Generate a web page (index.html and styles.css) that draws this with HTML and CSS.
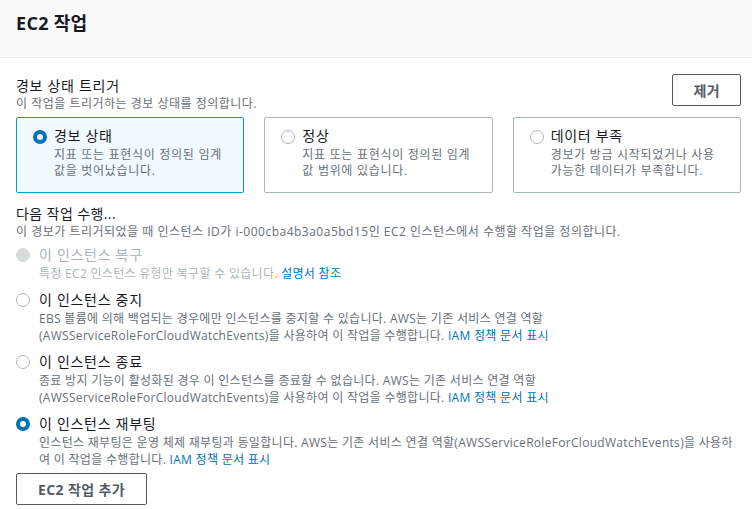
FILE: index.html
```html
<!DOCTYPE html>
<html lang="ko">
<head>
<meta charset="utf-8">
<link rel="stylesheet" href="styles.css">
</head>
<body>
<header class="head"><h1 class="head-title">EC2 작업</h1></header>
<main class="content">
  <div class="trigger-row">
    <div>
      <div class="label">경보 상태 트리거</div>
      <div class="sub">이 작업을 트리거하는 경보 상태를 정의합니다.</div>
    </div>
    <button class="btn">제거</button>
  </div>
  <div class="cards">
    <div class="card selected">
      <span class="radio on"></span>
      <div>
        <div class="card-title">경보 상태</div>
        <div class="card-desc">지표 또는 표현식이 정의된 임계<br>값을 벗어났습니다.</div>
      </div>
    </div>
    <div class="card">
      <span class="radio"></span>
      <div>
        <div class="card-title">정상</div>
        <div class="card-desc">지표 또는 표현식이 정의된 임계<br>값 범위에 있습니다.</div>
      </div>
    </div>
    <div class="card">
      <span class="radio"></span>
      <div>
        <div class="card-title">데이터 부족</div>
        <div class="card-desc">경보가 방금 시작되었거나 사용<br>가능한 데이터가 부족합니다.</div>
      </div>
    </div>
  </div>

  <div class="label action-label">다음 작업 수행...</div>
  <div class="sub">이 경보가 트리거되었을 때 인스턴스 ID가 i-000cba4b3a0a5bd15인 EC2 인스턴스에서 수행할 작업을 정의합니다.</div>

  <div class="options">
    <div class="option disabled">
      <span class="radio dis"></span>
      <div>
        <div class="opt-title">이 인스턴스 복구</div>
        <div class="opt-desc">특정 EC2 인스턴스 유형만 복구할 수 있습니다. <a class="link">설명서 참조</a></div>
      </div>
    </div>
    <div class="option">
      <span class="radio"></span>
      <div>
        <div class="opt-title">이 인스턴스 중지</div>
        <div class="opt-desc">EBS 볼륨에 의해 백업되는 경우에만 인스턴스를 중지할 수 있습니다. AWS는 기존 서비스 연결 역할<br>(AWSServiceRoleForCloudWatchEvents)을 사용하여 이 작업을 수행합니다. <a class="link">IAM 정책 문서 표시</a></div>
      </div>
    </div>
    <div class="option">
      <span class="radio"></span>
      <div>
        <div class="opt-title">이 인스턴스 종료</div>
        <div class="opt-desc">종료 방지 기능이 활성화된 경우 이 인스턴스를 종료할 수 없습니다. AWS는 기존 서비스 연결 역할<br>(AWSServiceRoleForCloudWatchEvents)을 사용하여 이 작업을 수행합니다. <a class="link">IAM 정책 문서 표시</a></div>
      </div>
    </div>
    <div class="option">
      <span class="radio on"></span>
      <div>
        <div class="opt-title">이 인스턴스 재부팅</div>
        <div class="opt-desc">인스턴스 재부팅은 운영 체제 재부팅과 동일합니다. AWS는 기존 서비스 연결 역할(AWSServiceRoleForCloudWatchEvents)을 사용하<br>여 이 작업을 수행합니다. <a class="link">IAM 정책 문서 표시</a></div>
      </div>
    </div>
  </div>
  <button class="btn add-btn">EC2 작업 추가</button>
</main>
</body>
</html>
```
FILE: styles.css
```css
* { box-sizing: border-box; }
body {
  margin: 0;
  background: #fff;
  font-family: "Open Sans", "Noto Sans CJK KR", sans-serif;
  color: #16191f;
}
.head {
  height: 58px;
  background: #fafafa;
  border-bottom: 1px solid #eaeded;
  padding: 11px 16px 0;
}
.head-title {
  margin: 0;
  font-size: 18px;
  line-height: 24px;
  font-weight: 700;
  letter-spacing: 0.3px;
  color: #16191f;
}
.content {
  padding: 16px 11px 0 16px;
}
.trigger-row {
  display: flex;
  justify-content: space-between;
  align-items: flex-start;
}
.trigger-row > div { padding-top: 2px; }
.label {
  font-size: 14px;
  line-height: 20px;
  letter-spacing: 0.7px;
  color: #16191f;
}
.action-label { letter-spacing: 0.4px; }
.sub {
  font-size: 12px;
  line-height: 16px;
  letter-spacing: 0.5px;
  color: #687078;
  white-space: nowrap;
}
.btn {
  font-family: inherit;
  background: #fff;
  border: 1px solid #545b64;
  border-radius: 2px;
  color: #545b64;
  font-weight: 700;
  font-size: 14px;
  letter-spacing: 0.4px;
  height: 32px;
  padding: 0 20px;
  cursor: pointer;
}
.cards {
  display: grid;
  grid-template-columns: 1fr 1fr 1fr;
  gap: 20px;
  margin-top: 5px;
}
.card {
  height: 76px;
  border: 1px solid #aab7b8;
  border-radius: 2px;
  padding: 8px 8px 0 16px;
  display: flex;
  gap: 7px;
  align-items: flex-start;
}
.card.selected {
  background: #f1faff;
  border-color: #00a1c9;
}
.card .radio { margin-top: 4px; }
.card-title {
  font-size: 14px;
  line-height: 20px;
  letter-spacing: 0.7px;
}
.card-desc {
  font-size: 12px;
  line-height: 16px;
  letter-spacing: 0.7px;
  color: #687078;
  white-space: nowrap;
  margin-top: 1px;
}
.radio {
  flex: none;
  width: 14px;
  height: 14px;
  border-radius: 50%;
  border: 1.5px solid #aab7b8;
  background: #fff;
}
.radio.on {
  border: 4px solid #0073bb;
}
.radio.dis {
  background: #d5dbdb;
  border-color: #d5dbdb;
}
.action-label { margin-top: 11px; }
.options {
  display: flex;
  flex-direction: column;
  gap: 8px;
  margin-top: 5px;
}
.option {
  display: flex;
  gap: 9px;
  align-items: flex-start;
}
.option .radio { margin-top: 3px; }
.opt-title {
  font-size: 14px;
  line-height: 20px;
  letter-spacing: 0.7px;
}
.opt-desc {
  font-size: 12px;
  line-height: 17px;
  letter-spacing: 0.3px;
  color: #687078;
  white-space: nowrap;
}
.disabled .opt-title, .disabled .opt-desc { color: #aab7b8; }
.link { color: #0073bb; text-decoration: none; }
.add-btn {
  margin-top: 5px;
  width: 131px;
  padding: 0;
}
```
